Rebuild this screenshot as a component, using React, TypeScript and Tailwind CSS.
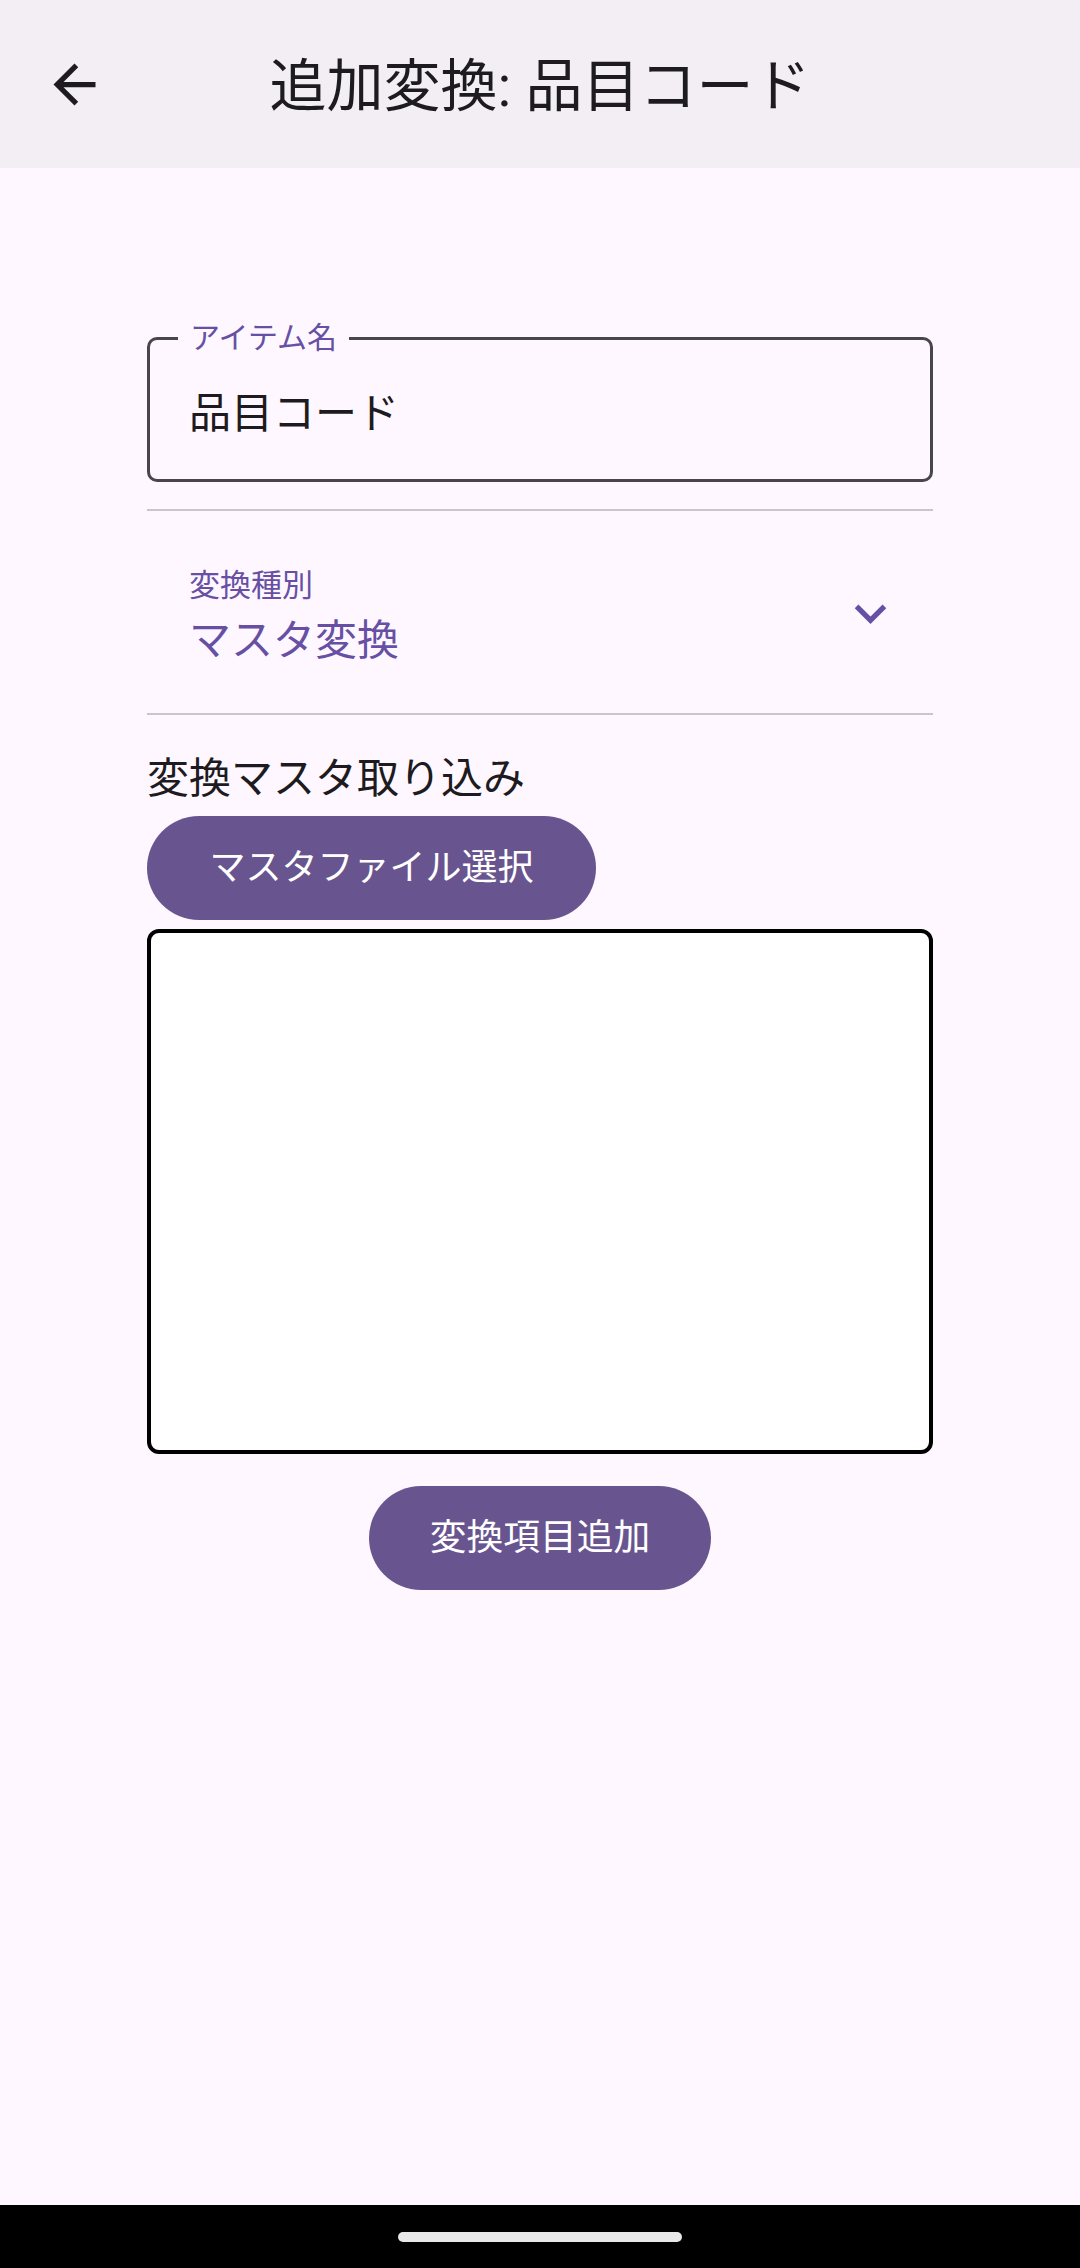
import React from "react";

const FONT = { fontFamily: 'Roboto, "Noto Sans CJK JP", "Noto Sans", sans-serif' };

function ArrowBack() {
  return (
    <svg viewBox="0 0 24 24" className="w-[63px] h-[63px]" fill="#1d1b20">
      <path d="M20 11H7.83l5.59-5.59L12 4l-8 8 8 8 1.41-1.41L7.83 13H20v-2z" />
    </svg>
  );
}

function ChevronDown() {
  return (
    <svg viewBox="0 0 24 24" className="w-[63px] h-[63px]" fill="#6750a4">
      <path d="M7.41 8.59L12 13.17l4.59-4.58L18 10l-6 6-6-6 1.41-1.41z" />
    </svg>
  );
}

export default function App() {
  return (
    <div className="w-[1080px] min-h-[2268px] bg-[#fef7ff] flex flex-col text-[#1d1b20]" style={FONT}>
      {/* top app bar */}
      <header className="h-[168px] bg-[#f2eef3] grid grid-cols-[1fr_auto_1fr] items-center">
        <button className="ml-[43px] w-[63px] h-[63px] flex items-center justify-center">
          <ArrowBack />
        </button>
        <h1 className="text-[57px] leading-none font-normal whitespace-nowrap pt-[4px]">追加変換: 品目コード</h1>
        <div />
      </header>

      <main className="w-[786px] mx-auto flex flex-col">
        {/* item name field */}
        <div className="relative mt-[169px] h-[145px] border-[3px] border-[#49454f] rounded-[10px] flex items-center pl-[39px] pt-[8px]">
          <span className="absolute left-[28px] top-[-17px] h-[30px] leading-[30px] px-[12px] bg-[#fef7ff] text-[30px] text-[#6750a4]">
            アイテム名
          </span>
          <span className="text-[42px] leading-none">品目コード</span>
        </div>

        <div className="mt-[27px] h-[2px] bg-[#cac4d0]" />

        {/* conversion type dropdown */}
        <div className="h-[202px] flex items-start justify-between pl-[42px] pr-[31px]">
          <div className="flex flex-col pt-[55px] gap-[7px]">
            <span className="text-[31px] leading-[40px] text-[#6750a4]">変換種別</span>
            <span className="text-[42px] leading-[55px] text-[#6750a4]">マスタ変換</span>
          </div>
          <div className="mt-[71px]">
            <ChevronDown />
          </div>
        </div>

        <div className="h-[2px] bg-[#cac4d0]" />

        <p className="mt-[36px] text-[42px] leading-[56px]">変換マスタ取り込み</p>

        <button className="mt-[9px] self-start h-[104px] w-[449px] rounded-full bg-[#68558f] text-white text-[36px] leading-none">
          マスタファイル選択
        </button>

        <div className="mt-[9px] h-[525px] bg-white border-[4px] border-black rounded-[12px]" />

        <button className="mt-[32px] self-center h-[104px] w-[342px] rounded-full bg-[#68558f] text-white text-[36.75px] leading-none">
          変換項目追加
        </button>
      </main>

      {/* system navigation bar */}
      <div className="mt-auto h-[63px] bg-black flex items-center justify-center">
        <div className="w-[284px] h-[10px] rounded-full bg-[#e8e8e8]" />
      </div>
    </div>
  );
}
